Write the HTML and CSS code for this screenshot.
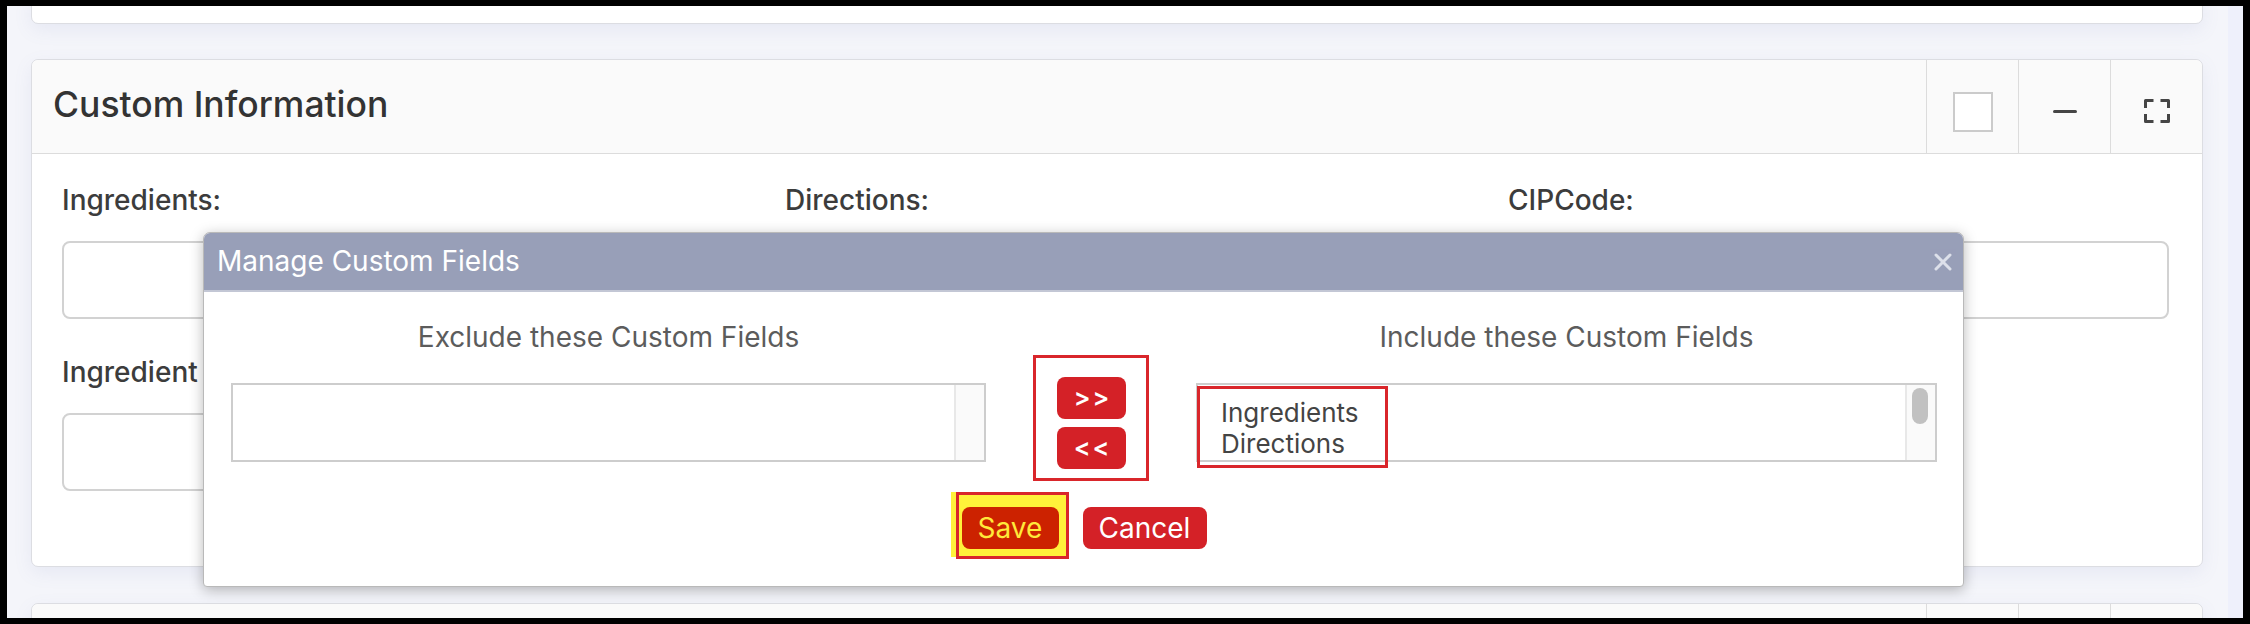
FILE: index.html
```html
<!DOCTYPE html>
<html lang="en">
<head>
<meta charset="utf-8">
<title>Custom Information</title>
<link rel="stylesheet" href="styles.css">
</head>
<body>
<div class="frame">
  <div class="page">
    <div class="card card-top"></div>

    <section class="card card-custom">
      <header class="card-head">
        <h2 class="card-title">Custom Information</h2>
        <div class="card-tools">
          <button class="tool" type="button"><span class="chk"></span></button>
          <button class="tool" type="button"><span class="minus"></span></button>
          <button class="tool" type="button">
            <svg class="expand" width="26" height="24" viewBox="0 0 26 24" fill="none" stroke="#454545" stroke-width="3" stroke-linejoin="round">
              <path d="M1.5 9V1.5H9.5"/>
              <path d="M16.5 1.5H24.5V9"/>
              <path d="M1.5 15V22.5H9.5"/>
              <path d="M16.5 22.5H24.5V15"/>
            </svg>
          </button>
        </div>
      </header>
      <div class="card-body">
        <div class="field-grid">
          <div class="field">
            <label class="field-label">Ingredients:</label>
            <div class="input"></div>
          </div>
          <div class="field">
            <label class="field-label">Directions:</label>
            <div class="input"></div>
          </div>
          <div class="field">
            <label class="field-label">CIPCode:</label>
            <div class="input"></div>
          </div>
          <div class="field">
            <label class="field-label">Ingredient Statement:</label>
            <div class="input"></div>
          </div>
        </div>
      </div>
    </section>

    <section class="card card-next">
      <header class="card-head">
        <div class="card-tools">
          <span class="tool"></span>
          <span class="tool"></span>
          <span class="tool"></span>
        </div>
      </header>
    </section>
  </div>
  <div class="scroll-strip"></div>

  <div class="dialog" role="dialog">
    <div class="dialog-head">
      <span class="dialog-title">Manage Custom Fields</span>
      <svg class="dialog-close" width="18" height="18" viewBox="0 0 18 18" stroke="#e1e4ed" stroke-width="3" stroke-linecap="round">
        <path d="M2 2L16 16M16 2L2 16"/>
      </svg>
    </div>
    <div class="dialog-body">
      <div class="picker">
        <div class="pick-head pick-left">Exclude these Custom Fields</div>
        <div class="listbox pick-left-list">
          <div class="list-items"></div>
          <div class="list-track"></div>
        </div>
        <div class="mover">
          <div class="mover-box">
            <button class="btn btn-arrow" type="button">&gt;&gt;</button>
            <button class="btn btn-arrow" type="button">&lt;&lt;</button>
          </div>
        </div>
        <div class="pick-head pick-right">Include these Custom Fields</div>
        <div class="listbox pick-right-list">
          <div class="list-items">
            <div class="list-item">Ingredients</div>
            <div class="list-item">Directions</div>
          </div>
          <div class="list-track"><span class="thumb"></span></div>
          <span class="mark-items"></span>
        </div>
      </div>
      <div class="actions">
        <span class="save-hl">
          <span class="save-box">
            <button class="btn btn-save" type="button">Save</button>
          </span>
        </span>
        <button class="btn btn-cancel" type="button">Cancel</button>
      </div>
    </div>
  </div>
</div>
</body>
</html>
```

FILE: styles.css
```css
* { box-sizing: border-box; }

html, body {
  margin: 0;
  padding: 0;
  background: #000;
  width: 2250px;
  height: 624px;
  overflow: hidden;
  font-family: Inter, "Noto Sans", "Liberation Sans", sans-serif;
}

.frame {
  position: relative;
  margin: 6px 7px;
  width: 2236px;
  height: 612px;
  overflow: hidden;
  display: flex;
  background: #f4f5fa;
}

.page {
  flex: 1;
  background: #f4f5fa;
  padding: 0 25px 0 24px;
}

.scroll-strip {
  width: 15px;
  background: #eef0fb;
}

.card {
  background: #fff;
  border: 1px solid #dcdde2;
  border-radius: 7px;
  box-shadow: 0 6px 18px rgba(120, 130, 190, 0.10);
}

.card-top {
  height: 30px;
  margin-top: -12px;
}

.card-custom {
  margin-top: 35px;
}

.card-next {
  margin-top: 36px;
  height: 60px;
}

.card-head {
  display: flex;
  align-items: stretch;
  height: 94px;
  background: #fafafa;
  border-bottom: 1px solid #dcdcdc;
  border-radius: 7px 7px 0 0;
}

.card-title {
  flex: 1;
  margin: 0;
  padding-left: 21px;
  font-size: 35.5px;
  font-weight: 500;
  line-height: 90px;
  color: #333;
}

.card-next .card-head { justify-content: flex-end; }

.card-tools {
  display: flex;
  margin-left: auto;
}

.tool {
  width: 92px;
  border: 0;
  border-left: 1px solid #dcdcdc;
  background: transparent;
  padding: 0;
  display: flex;
  align-items: center;
  justify-content: center;
}

.chk {
  width: 40px;
  height: 40px;
  border: 2px solid #cbcbcb;
  background: #fff;
  margin-top: 11px;
}

.minus {
  width: 24px;
  height: 3px;
  border-radius: 2px;
  background: #454545;
  margin-top: 9px;
}

.expand { margin-top: 9px; }

.card-body {
  padding: 30px 33px 75px 30px;
}

.field-grid {
  display: grid;
  grid-template-columns: repeat(3, 661px);
  column-gap: 62px;
  row-gap: 37px;
}

.field-label {
  display: block;
  font-size: 28px;
  line-height: 32px;
  font-weight: 500;
  color: #3c3c3c;
  margin-bottom: 25px;
  white-space: nowrap;
}

.input {
  height: 78px;
  border: 2px solid #d2d2d2;
  border-radius: 8px;
  background: #fff;
}

/* dialog (overlays the page) */
.dialog {
  position: absolute;
  left: 196px;
  top: 226px;
  width: 1761px;
  background: #fff;
  border: 1px solid #b9b9b9;
  border-radius: 7px 7px 4px 4px;
  box-shadow: 0 3px 14px rgba(0, 0, 0, 0.28);
  overflow: hidden;
}

.dialog-head {
  display: flex;
  align-items: center;
  height: 59px;
  background: #989fb8;
  border-bottom: 2px solid #c3c7d5;
  padding: 0 11px 0 13px;
}

.dialog-title {
  flex: 1;
  font-size: 28px;
  line-height: 57px;
  color: #fff;
}

.dialog-close { opacity: 0.95; }

.dialog-body {
  padding: 30px 26px 29px 27px;
}

.picker {
  display: grid;
  grid-template-columns: 755px 1fr 741px;
  grid-template-rows: auto auto;
}

.pick-head {
  font-size: 28px;
  line-height: 30px;
  color: #5c5c5c;
  text-align: center;
  margin-bottom: 31px;
}

.pick-left { grid-column: 1; grid-row: 1; }
.pick-right { grid-column: 3; grid-row: 1; }
.pick-left-list { grid-column: 1; grid-row: 2; }
.pick-right-list { grid-column: 3; grid-row: 2; }

.listbox {
  position: relative;
  display: flex;
  height: 79px;
  border: 2px solid #cdcdcd;
  background: #fff;
}

.list-items {
  flex: 1;
  padding: 12px 0 0 23px;
}

.list-item {
  font-size: 26px;
  line-height: 31px;
  color: #444;
}

.list-track {
  width: 30px;
  background: #fafafa;
  border-left: 2px solid #e8e8e8;
  padding: 3px 0 0 5px;
}

.thumb {
  display: block;
  width: 16px;
  height: 36px;
  border-radius: 8px;
  background: #c1c1c1;
}

.mark-items {
  position: absolute;
  left: -1px;
  top: 1px;
  width: 191px;
  height: 82px;
  border: 3px solid #d9262b;
}

.mover {
  grid-column: 2;
  grid-row: 1 / span 2;
  align-self: end;
  justify-self: center;
  margin-bottom: -19px;
}

.mover-box {
  display: flex;
  flex-direction: column;
  gap: 8px;
  width: 116px;
  border: 3px solid #d9262b;
  padding: 19px 20px 9px 21px;
}

.btn {
  border: 0;
  margin: 0;
  font-family: Inter, "Noto Sans", "Liberation Sans", sans-serif;
  color: #fff;
  background: #d42127;
  border-radius: 8px;
  cursor: pointer;
}

.btn-arrow {
  width: 69px;
  height: 42px;
  padding: 0 0 2px 2px;
  font-size: 25px;
  font-weight: 600;
  letter-spacing: 2px;
  line-height: 40px;
}

.actions {
  display: flex;
  align-items: flex-start;
  justify-content: center;
  gap: 14px;
  margin-top: 30px;
  padding-right: 11px;
}

.save-hl {
  display: flex;
  background: #fff23a;
  padding-left: 5px;
  height: 65px;
}

.save-box {
  display: flex;
  border: 3px solid #d9262b;
  background: #fff23a;
  padding: 12px 7px 7px 3px;
  height: 67px;
}

.btn-save {
  width: 97px;
  height: 42px;
  background: #cc2200;
  color: #ffe93a;
  font-size: 28px;
  line-height: 42px;
  padding: 0;
}

.btn-cancel {
  margin-top: 15px;
  width: 124px;
  height: 42px;
  font-size: 28px;
  line-height: 42px;
  padding: 0;
}
```
